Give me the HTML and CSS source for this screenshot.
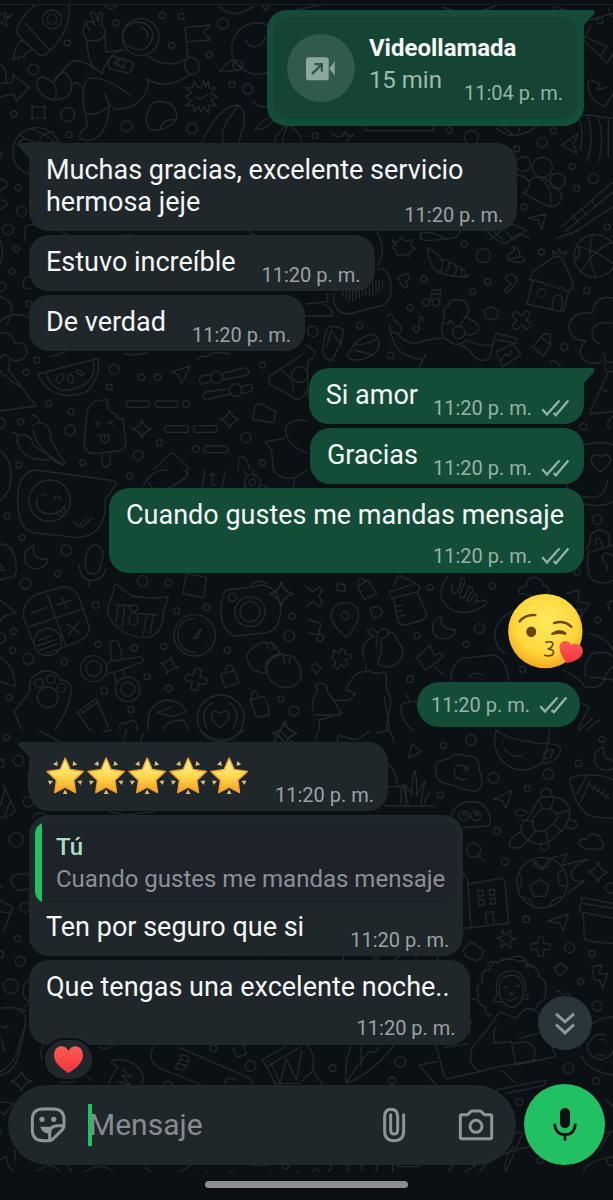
FILE: index.html
```
<!DOCTYPE html>
<html lang="es">
<head>
    <meta charset="UTF-8">
    <meta name="viewport" content="width=device-width, initial-scale=1">
    <title>Chat</title>
    <link rel="stylesheet" href="styles.css">
</head>
<body>

    <!-- shared shapes -->
    <svg class="defs" aria-hidden="true">
        <defs>
            <linearGradient id="gold" x1="0" y1="0" x2="0" y2="1">
                <stop offset="0" stop-color="#fff3a8"/>
                <stop offset=".5" stop-color="#ffdc52"/>
                <stop offset="1" stop-color="#f9a01b"/>
            </linearGradient>
            <radialGradient id="face" cx=".5" cy=".38" r=".64">
                <stop offset="0" stop-color="#ffe95c"/>
                <stop offset=".65" stop-color="#ffd83c"/>
                <stop offset="1" stop-color="#f2a21c"/>
            </radialGradient>
            <linearGradient id="red" x1="0" y1="0" x2="0" y2="1">
                <stop offset="0" stop-color="#ff5a55"/>
                <stop offset="1" stop-color="#f0353c"/>
            </linearGradient>
            <symbol id="ticks" viewBox="704 498 88 54">
                <path d="M708 529L722 545L760 502M742 540L749 547L787 502" fill="none" stroke="currentColor" stroke-width="7"/>
            </symbol>
            <symbol id="star" viewBox="139 77 116 116">
                <path d="M196 83L211 117L250 123L222 149L227 186L196 170L165 186L170 149L142 123L181 117Z" fill="url(#gold)" stroke="#f3a02c" stroke-width="4" stroke-linejoin="round"/>
                <path d="M160 102L172 92L174 107ZM232 102L220 92L218 107ZM145 150L160 151L150 163ZM247 150L232 151L242 163ZM196 177L203 190H189Z" fill="#dcbf7c"/>
            </symbol>
            <symbol id="sparkle" viewBox="-30 -30 60 60">
                <path d="M0 -27Q5 -6 27 0Q5 6 0 27Q-5 6 -27 0Q-5 -6 0 -27Z"/>
            </symbol>
            <symbol id="plus" viewBox="-36 -36 72 72">
                <path d="M-10 -30Q0 -36 10 -30V-10H30Q36 0 30 10H10V30Q0 36 -10 30V10H-30Q-36 0 -30 -10H-10Z"/>
            </symbol>
            <symbol id="moon" viewBox="-42 -42 84 84">
                <path d="M-8 -36Q-18 8 36 6Q24 38 -8 34Q-38 28 -36 -6Q-32 -28 -8 -36Z"/>
            </symbol>
            <symbol id="lock" viewBox="-36 -42 72 84">
                <path d="M-28 -8L18 -20L30 20L-14 36ZM-12 -14Q-16 -38 0 -38Q12 -36 12 -20"/>
            </symbol>
        </defs>
    </svg>

    <div class="screen">

        <!-- wallpaper doodles -->
        <svg class="wallpaper" viewBox="0 0 1839 3516" preserveAspectRatio="xMidYMin slice" aria-hidden="true">
            <g>
                <path d="M52 82Q75 30 125 0M52 82Q48 100 60 112L110 160Q122 170 135 165Q205 110 208 30Q208 10 200 0M75 68L148 150M62 122Q42 145 40 182Q50 165 56 178Q58 160 72 174Q72 155 95 150Q85 125 62 122"/>
                <circle cx="156" cy="58" r="28"/><circle cx="156" cy="58" r="15"/>
                <path d="M258 118Q240 85 262 66Q278 60 285 74L272 45Q275 30 285 40L295 66L298 38Q312 35 308 50L304 78Q325 90 308 115Q285 128 258 118M258 70L268 90M260 120Q262 170 282 210M315 108L318 156L368 150"/>
                <circle cx="422" cy="111" r="55"/><path d="M460 100Q450 155 410 148Q365 140 368 100Q380 68 415 66Q448 68 460 100M425 82Q446 90 443 112"/>
                <path d="M305 222Q325 160 370 148M336 168L388 182Q402 188 398 202Q394 220 378 218L336 208Q322 204 326 188Q328 170 336 168"/>
                <path d="M445 168Q500 210 555 178M563 170L555 83L632 75L610 97L632 120L562 125M565 172Q598 170 598 205Q592 226 570 222Q550 210 556 190Q558 176 565 172M572 222Q500 275 438 236Q450 255 440 270Q420 325 350 328Q325 325 315 278"/>
                <path d="M308 222Q240 170 210 186L162 245Q172 220 190 216M110 255Q108 232 130 230L160 248Q180 275 160 300Q120 292 110 255M160 300Q220 300 215 250Q205 220 190 216M215 255L230 246L250 262M256 340Q240 270 262 238Q305 220 390 286M256 338Q290 352 326 318Q330 370 300 405Q270 432 240 415Q235 395 262 380L256 338"/>
                <path d="M603 265L610 242L617 262L625 243L627 265L648 262L633 280L652 290L633 300L648 318L627 315L625 338L612 320L603 338L596 320L583 336L580 315L558 318L573 300L556 290L574 280L558 262L578 264L583 243L594 262ZM588 290L598 298L622 284"/>
                <path d="M465 305Q530 300 530 350Q530 362 518 372Q490 392 450 390Q435 370 440 350Q450 310 465 305M480 390Q484 355 528 360"/>
                <circle cx="772" cy="146" r="77"/><path d="M738 120Q745 142 768 140Q792 135 795 110M752 98V99M770 96V97M658 214L695 180L730 205L710 212Z"/><circle cx="714" cy="196" r="15"/>
                <path d="M0 250L38 248L40 225L88 262L48 303L40 282L0 290M0 195Q20 200 20 250M0 45L18 38L12 55L38 42L18 60L20 78L0 65"/>
                <path d="M605 430Q650 320 715 315Q740 330 730 380L715 430M670 430Q655 380 715 320M762 305Q770 325 810 320M765 388Q790 350 830 350Q800 392 765 388M860 375Q820 410 825 430M865 375Q845 410 850 430M868 375Q905 400 905 430M310 5Q330 50 356 5M655 20Q700 60 760 20"/>
                <circle cx="110" cy="455" r="72"/><path d="M60 405Q100 440 180 425M88 385Q150 405 165 430M118 430Q120 400 160 395M50 440Q70 400 100 430"/>
                <path d="M95 318Q115 325 136 318Q130 338 136 356Q115 350 94 358Q100 338 95 318Z"/>
                <path d="M0 535L20 545V560L0 570M0 600Q25 600 20 615L0 628M0 455L8 465L0 475"/>
                <path d="M75 680V720M75 680Q100 665 130 685L180 690L220 720M360 720Q380 690 420 720M740 690L790 720"/>
            </g>
            <g transform="translate(780 0)">
                <path d="M550 22Q640 55 720 10M110 30L200 10M890 20L990 60L1059 40M990 80L970 120L1040 190L1059 160M975 110L1040 140L1020 170M1045 25L1055 50M880 20V60"/>
                <path d="M985 240Q980 300 1035 320L1059 280M990 240L1020 250L1010 270L1040 262M905 435L955 400L940 430L950 460ZM955 350L990 345L1059 355M955 350Q975 400 960 450M985 352Q1005 420 980 485M1015 352Q1035 420 1015 485M1045 352V470"/>
                <path d="M905 680L1059 545M915 695L1059 575M930 705L1059 620M940 648L955 668M965 626L980 646M995 602L1008 620"/>
                <circle cx="790" cy="492" r="22"/><circle cx="847" cy="502" r="30"/><circle cx="892" cy="543" r="23"/><circle cx="634" cy="412" r="21"/>
                <path d="M768 530Q790 520 808 545Q810 570 790 578Q840 610 870 620Q900 620 905 590Q900 560 850 535Q820 525 808 545M845 540Q880 560 870 618M802 655L858 642L845 690L835 660ZM710 385Q760 430 830 380M730 380L760 405M780 380L770 410M215 400Q230 415 245 410L255 395L262 408L280 405L262 420L270 440M315 378V392H520V378M690 720L750 670L800 690L760 720M480 720V700Q520 690 560 720"/>
            </g>
            <g transform="translate(0 690)">
                <path d="M0 30Q15 60 0 105M100 140Q65 135 70 170Q80 180 95 175M0 200Q40 210 35 250L20 285M0 275Q35 240 85 262M0 310Q35 300 45 340Q80 330 80 370Q70 400 30 388M0 385Q15 360 30 388L25 420L108 528L0 543M0 420Q10 445 20 435Q35 460 60 470"/>
                <path d="M114 432L293 386Q305 440 260 485Q200 510 150 480Q120 455 114 432ZM138 430Q150 470 190 482Q240 480 270 450Q285 425 280 395M168 450Q170 430 192 432Q192 455 175 460ZM205 455Q198 435 215 432Q225 450 215 460ZM228 425Q235 412 252 432Q245 442 228 425Z"/>
                <path d="M325 510Q262 505 260 560L252 640Q255 670 280 670L350 664Q378 660 378 640L368 565Q350 570 345 550Q325 545 325 530Q315 520 325 510M306 670V700Q318 725 330 700V670M285 575L300 582L288 590M338 572L325 580L340 584M295 615H328M302 616Q300 638 315 640Q328 635 325 616M314 618V628"/>
                <path d="M515 425L570 408L545 462L535 435ZM382 513H445Q455 522 445 532H385Q372 522 382 513ZM470 513H530Q540 522 530 532H470Q460 522 470 513ZM500 587H562Q570 597 562 607H500Q488 597 500 587ZM585 587H647Q657 597 647 607H585Q575 597 585 587ZM615 648H680Q688 658 680 668H615Q605 658 615 648Z"/>
                <circle cx="650" cy="442" r="18"/><circle cx="707" cy="480" r="19"/><circle cx="558" cy="522" r="10"/><circle cx="587" cy="657" r="10"/><circle cx="899" cy="434" r="24"/>
                <path d="M632 434L605 438Q592 450 605 462L632 455M667 430L738 413Q752 425 742 435L668 450M690 476L615 486Q602 500 616 510L690 492M724 470L752 462Q762 475 752 485L724 490"/>
                <path d="M905 375L808 440Q802 460 815 465L890 508Q905 512 921 480M840 420Q880 440 880 480M765 530L775 520L800 530L828 545L820 578L758 568ZM858 590Q880 560 921 575M858 590Q850 640 921 670M795 635L855 625M795 635L815 660L820 720M460 720L510 670Q520 665 540 690Q560 700 565 720M715 720V690Q735 660 750 720"/>
                <path d="M98 590Q110 570 140 585Q155 610 152 625Q165 655 195 700Q180 715 140 670Q105 640 100 600M52 640Q45 610 75 615Q95 620 100 645L190 705M52 630Q60 675 100 685Q130 690 150 690M98 555Q118 560 118 578M32 608Q50 605 55 620M150 380L200 365M372 370Q400 380 440 368M590 390Q600 375 620 380Q640 360 690 372M0 660Q30 690 32 720"/>
            </g>
            <g transform="translate(918 690)">
                <path d="M258 30L272 38L285 22L298 34L318 28L314 45L328 55L312 64L310 80L292 72L272 78L272 62L258 52L270 45ZM365 55Q395 65 410 95Q410 125 398 128Q368 110 365 55ZM410 90Q432 85 430 108L415 132M430 100Q455 95 450 125L440 138M450 110Q472 105 466 136M468 118Q480 118 478 138L492 134M398 128L440 138L485 142"/>
                <path d="M210 0Q245 60 215 108M345 10Q340 32 365 32L440 25Q460 20 462 0M535 0L580 35L600 40L640 10L670 25M560 0L590 30M750 25L820 0M600 5L620 25"/>
                <circle cx="868" cy="78" r="64"/><path d="M810 50Q880 60 930 110M860 15Q840 80 870 140M925 35Q870 50 825 125M806 90Q830 75 815 45"/>
                <path d="M605 90Q600 75 615 68Q630 70 622 48Q645 60 640 75Q660 85 655 95Q620 100 605 90ZM610 85Q630 88 642 76M670 148L685 120L742 82L760 78Q785 110 802 165Q800 182 788 180Q775 188 770 172Q755 180 750 168Q735 175 730 162Q715 170 710 155Q695 162 690 148Q680 155 670 148M680 152L662 222L772 246L788 184M738 236L742 205Q750 190 768 200Q772 215 765 242M745 82L740 62L755 72L760 56L768 72L782 64L772 85"/>
                <circle cx="707" cy="190" r="13"/>
                <path d="M275 140L305 130Q318 150 298 155L305 170L292 175ZM598 148Q600 130 620 134Q638 145 632 155L605 190L596 182L615 160ZM372 215L378 180H405L400 218M376 192H404"/><circle cx="360" cy="217" r="11"/><circle cx="390" cy="217" r="11"/><path d="M338 295L342 260Q355 262 350 275"/><circle cx="331" cy="297" r="9"/>
                <path d="M85 190Q75 250 130 252L235 225Q270 190 245 130Q230 110 215 120M110 180V200M120 178V208M130 176V212M140 174V215M150 172V208M160 170V205M170 168V200M180 165V195M190 160V200M200 155V195M210 152V190M220 150V185M230 150V172M0 222L65 215V190M50 222Q85 235 80 258H0"/>
                <path d="M65 292Q90 285 112 298Q110 330 80 390Q55 395 50 360Q55 310 65 292M62 350L75 300L105 345L110 310M125 375Q150 320 205 312Q225 330 215 360Q190 390 145 390Q125 388 125 375ZM150 345Q200 340 212 325M145 360L200 375"/>
                <path d="M245 260Q255 240 265 270L285 290Q290 310 275 312Q310 355 360 330Q390 325 410 325M250 285Q250 310 270 350Q290 380 345 388M250 305L280 310M360 370L340 410M415 265Q405 235 430 225Q430 205 455 210Q485 210 485 235Q495 245 475 265L460 292M412 270Q400 300 415 325L440 340Q460 350 480 330M410 280H430V270L445 285M475 260Q490 260 492 270Q520 275 518 300Q515 315 480 315"/><circle cx="458" cy="307" r="19"/>
                <path d="M482 330Q520 350 560 345M460 345Q480 345 505 380Q530 400 550 385L570 310L632 325L630 340L575 330M570 365L622 342L645 375L590 410ZM585 390L600 370L608 380L618 360M535 240L555 230L576 240V260L560 270L540 265ZM0 345L30 365L20 385L5 395V500M732 400Q735 390 750 395L765 410"/>
                <path d="M680 350L705 322L735 345L712 378ZM705 322Q715 305 732 315V340"/><use href="#plus" x="612" y="235" width="70" height="72" transform="rotate(42 647 270)"/>
                <path d="M921 205Q870 190 858 250Q800 240 788 290Q795 335 840 332Q810 360 830 385Q850 410 890 395M921 280Q860 270 858 310Q860 335 880 340M893 370L900 395L921 398M895 400L900 425H921M905 430L850 552L921 545M885 470Q895 490 905 480M921 560Q895 580 910 595"/>
                <path d="M835 645Q890 630 921 645M855 690Q860 665 885 680Q905 665 915 690Q905 710 885 725Q860 710 855 690"/>
            </g>
            <g transform="translate(0 1410)">
                <path d="M55 60Q60 5 110 0L340 32Q355 38 345 48L315 90Q320 150 290 180Q260 205 225 202L100 188Q45 175 55 60ZM32 0Q40 60 0 92"/><circle cx="149" cy="92" r="62"/><path d="M110 85Q105 130 150 132Q185 130 195 105M122 78Q128 65 138 78M163 85Q172 68 182 88M168 120Q170 140 190 137Q205 130 190 110M180 122L188 130M222 155L235 170L258 145M238 165L246 172L275 145"/>
                <path d="M430 50Q450 0 500 0M445 35L460 58M550 0Q590 10 515 50L490 60M605 60L615 0M675 5L665 60M560 5Q570 20 520 45M630 15H648M638 8L634 42Q640 50 648 42M730 0L740 15M760 0L762 18M820 0Q860 50 921 0M880 50L885 25"/><circle cx="757" cy="37" r="24"/><circle cx="757" cy="37" r="9"/><path d="M735 50L730 60M780 42L815 60"/>
                <path d="M260 250Q270 220 295 228Q312 240 308 260L298 300Q285 320 265 308Q250 295 260 250M238 285Q240 330 275 332Q310 330 318 295M268 333L265 350M0 222Q35 220 45 265Q55 310 40 320L0 330M0 280L12 300H0M0 390L48 428L10 440L0 455M0 562Q45 590 45 650L0 635"/>
                <path d="M120 370L190 350Q225 350 238 385L268 470Q270 500 235 515L130 555M70 440Q68 400 100 378L120 370M70 440L100 520M88 470L255 415M142 375L198 528M92 430L142 412M170 405L215 390M185 380L200 415M200 460L240 490M238 455L205 495"/><circle cx="143" cy="516" r="41"/><path d="M115 512L155 497M112 528L170 508M120 540L172 522"/>
                <path d="M345 340L395 378L455 385L505 380L490 425Q490 490 445 502Q380 505 340 460Q310 420 335 385ZM345 403L395 408M355 405L348 455M375 407L366 470M415 430L472 435M440 432L430 495M460 435L450 490M388 408Q385 420 400 425Q415 425 412 410Q400 400 388 408M400 425Q382 440 390 462Q402 468 412 460Q420 440 400 425"/>
                <circle cx="584" cy="496" r="62"/><path d="M584 446Q530 450 534 500Q540 545 584 546M580 505L605 475L590 505ZM608 455V456M622 472V473M630 496V497M622 521V522M608 540V541"/>
                <path d="M548 370L560 310L620 322L610 384ZM680 360L760 350L785 345Q840 350 842 420L838 450Q830 480 800 488L710 498Q680 495 665 450Q658 380 680 360M755 345Q770 325 800 340"/><circle cx="697" cy="382" r="12"/><circle cx="750" cy="425" r="45"/><circle cx="750" cy="425" r="30"/>
                <path d="M740 555Q755 525 795 515L825 525L840 550Q800 560 795 590Q795 600 800 608Q745 610 740 555M800 590Q810 560 845 552L880 560Q910 590 900 630Q880 660 840 650Q800 635 800 590M795 515L810 540M815 515L825 540M850 555L855 580M870 560L868 582"/>
                <circle cx="281" cy="596" r="39"/><circle cx="281" cy="596" r="23"/><circle cx="383" cy="658" r="37"/><circle cx="383" cy="658" r="21"/><path d="M318 588L330 575L420 560Q435 565 428 575L350 605L320 612M335 575L330 520Q340 505 355 515L368 568M342 608L350 640M370 602L375 622"/>
                <path d="M42 725L90 665Q85 620 115 612Q125 600 150 604Q175 608 180 630Q215 630 213 665Q210 710 165 780M42 725L65 780"/><circle cx="117" cy="640" r="13"/><circle cx="153" cy="628" r="13"/><circle cx="184" cy="653" r="13"/><circle cx="143" cy="682" r="31"/>
                <path d="M232 728L288 685L325 770M232 728L270 780M245 730L290 698M360 780Q355 755 375 760L400 750Q415 760 410 780M445 780Q435 700 500 690Q540 690 560 725L520 740L470 728L520 710M490 780Q500 750 550 750L565 780"/>
                <circle cx="662" cy="745" r="70"/><path d="M620 775Q595 720 640 698M700 775Q725 725 690 698M635 740Q635 715 660 730Q685 715 688 740Q680 760 660 772Q640 760 635 740M750 690L790 680Q805 690 808 735L770 742ZM755 688V670Q765 655 772 668L775 682M848 760L870 780"/>
                <use href="#moon" x="68" y="220" width="84" height="84"/><use href="#plus" x="552" y="592" width="72" height="72" transform="rotate(12 588 628)"/><use href="#lock" x="655" y="580" width="66" height="80"/>
            </g>
            <g transform="translate(918 1410)">
                <path d="M780 40Q790 80 860 82Q900 80 905 30M830 100Q880 115 921 95M848 240Q835 230 850 225L855 195Q880 165 910 195V225M870 225V205Q880 195 890 230M845 250Q840 330 870 335Q900 345 921 330M848 248L921 225M905 300L900 280Q880 262 895 252Q910 245 921 260"/>
                <path d="M0 350L20 365L40 350L50 360L38 380L50 400L38 410L20 395L0 410M95 340L118 345L115 365L92 360ZM75 440Q80 395 118 398Q158 400 158 440Q150 475 120 503Q85 475 75 440"/><circle cx="117" cy="437" r="12"/>
                <path d="M155 350L185 330L212 370L175 388ZM158 348Q150 325 168 325L182 335M192 415L215 408L230 425L222 442L200 444ZM252 365L330 340Q345 350 338 365L258 385Q248 375 252 365M262 350Q270 335 275 320Q285 312 295 325Q310 325 325 340M262 385L275 450Q280 468 300 465L350 450Q365 440 360 425L335 370M270 410L288 405M275 425L285 422M278 440L296 435"/>
                <path d="M425 320Q390 370 415 400Q440 430 480 428Q540 415 542 395Q530 385 505 398M440 340Q430 365 445 370Q460 370 465 325Q480 320 475 340L460 375Q465 390 475 380L490 350Q505 350 498 365L482 392Q495 400 505 370Q520 375 510 390M640 370Q635 350 660 350Q660 320 690 322Q715 330 710 345Q735 350 728 370Q700 385 640 370M780 370L820 360L815 395L850 400L820 450L828 420L790 415M620 425Q560 450 568 510Q575 540 600 550M921 390L905 400L910 420"/>
                <path d="M8 450L45 460L38 495L5 488M40 490L55 500L45 515L32 510ZM85 540L100 550L105 535L118 540L115 552L135 555V565L118 570L125 585L112 592L105 580L95 598L82 590L90 575L78 565ZM15 590L30 580L45 595L32 612ZM372 525L330 565L345 575Q345 590 360 600L412 560L405 550L385 555ZM385 590L412 612M435 635Q435 580 470 565L560 555Q600 560 610 635M490 625Q500 600 530 615M310 690L300 672M285 720Q280 700 310 695Q340 690 340 700M285 720Q290 760 320 780"/>
                <path d="M175 570L170 545Q175 505 205 500Q185 495 185 480Q200 470 215 490Q230 470 245 480Q255 500 225 505Q230 560 215 570M215 495L210 530M245 490Q265 480 275 515Q300 540 285 565Q265 595 240 590Q215 590 215 570M180 580V600Q210 615 235 605M180 605Q145 600 120 660L150 670L130 690L80 692M235 605Q245 620 240 650L255 690L240 780M235 680L250 780M20 720Q15 680 35 665L30 645Q40 635 62 645L65 665Q85 690 105 730M40 780V750L105 730M25 735L100 735"/>
                <path d="M770 600Q830 630 835 650Q870 660 890 640Q900 600 921 590M840 620Q830 580 860 550Q900 540 921 560M850 490Q900 500 921 540M825 700L850 710L815 780M850 620L921 630M820 780L860 745M840 780L880 750"/>
                <use href="#moon" x="374" y="432" width="82" height="82"/>
            </g>
            <g transform="translate(0 2190)">
                <path d="M115 0L190 40M370 40L380 0M310 5L335 0M420 40L430 10M600 0Q670 60 730 0M820 40L840 0Q860 30 890 40M0 90L12 88L10 110L0 115M10 165L45 240Q35 265 0 262M15 180L0 230M30 215L15 255M85 130V180M100 265L105 250H135L140 275M35 440Q60 425 85 435M35 440Q28 470 60 482L90 475M90 355V400M0 512L38 530L10 610M0 545L35 550M0 465L8 475M115 705L125 695Q145 700 150 710M770 700L775 690M820 700L825 690M860 690L880 700M330 245L380 255L460 245"/>
            </g>
            <g transform="translate(918 2190)">
                <path d="M30 35L35 0M95 35V15L150 30L190 5M210 10L250 0L265 35M245 100Q270 120 275 165L300 175V225M285 170V222M245 170H300M235 228H385M308 222Q295 190 290 160Q315 180 318 195Q315 150 328 120Q335 170 330 200Q345 170 358 152Q345 200 345 222M355 222Q360 200 370 190"/>
                <path d="M318 42L345 65L308 85L312 65ZM390 130Q380 90 425 88Q450 65 480 78Q520 75 520 120Q540 170 510 185Q470 180 440 165Q390 160 390 130M482 115Q470 100 452 108Q440 120 447 138Q460 155 482 146M488 108L484 122L472 116M570 0Q555 60 595 100Q650 140 705 100Q725 70 730 0M570 0Q600 25 670 35Q725 50 730 30M725 42Q770 40 762 65Q750 100 708 100M742 58L715 65L712 88L735 82ZM595 55Q615 85 648 78M592 35V38M660 65V68"/>
                <path d="M436 265Q440 225 485 215Q540 210 552 260Q555 290 545 288L470 293"/><circle cx="473" cy="257" r="15"/><circle cx="509" cy="257" r="15"/><circle cx="476" cy="252" r="5"/><circle cx="512" cy="252" r="5"/>
                <path d="M563 207L617 182L600 236L590 212ZM663 270L700 205Q720 198 745 200Q780 205 792 240Q790 290 755 310Q725 350 690 340Q645 330 645 290Q650 275 663 270M680 265L710 235Q740 235 755 255Q755 275 720 300Q690 310 682 295ZM682 275L648 270M690 300L665 330M720 300L725 335M745 285L770 305M755 250L790 240M735 237L745 202M710 235L698 208M708 200Q700 175 722 175Q740 180 738 198M655 255Q625 265 628 245Q640 230 665 248M645 305Q605 325 612 350Q640 365 665 330M705 342Q700 362 715 362Q732 360 728 340M790 270Q815 270 812 288Q800 305 780 290"/>
                <path d="M795 165Q780 140 820 137Q890 130 921 150M795 165Q820 265 880 262L921 265M815 190L840 140M825 215L850 155M850 165L910 205M860 180L870 165M872 188L882 172M885 195L895 180M897 205L907 190"/>
                <circle cx="503" cy="361" r="21"/><path d="M518 378L535 393M820 345Q815 325 840 328Q850 305 872 315Q885 315 882 330Q900 340 888 355Q840 365 820 345M470 425L485 450L495 595M485 462L585 445Q595 448 597 460L608 580L472 595M515 483L530 481L532 497L517 499ZM550 480L565 478L567 494L552 496ZM518 510L533 508L535 525L520 527ZM552 506L567 504L569 521L554 523ZM542 582L538 548L560 545L564 580"/>
                <circle cx="708" cy="458" r="76"/><path d="M672 468L700 448L728 465L720 498L685 500ZM680 390L708 415L735 390M690 395L682 405L708 418L730 405M640 430L648 450L638 480M770 420L755 430L760 465L778 470M650 500L672 510L682 528M765 500L740 510L730 528M725 388L785 370L768 405L848 388Q800 405 795 435Q800 460 835 452L785 490"/>
                <path d="M828 503L921 520M828 503L820 545L921 565M832 550L835 625Q840 635 921 640M830 520L921 535M725 573L787 552L772 602L762 580ZM590 600L600 615L615 600L612 620L630 628L612 632L615 655L600 640L585 655L590 632L572 625L590 618ZM470 660L495 635L532 660Q530 690 510 692L480 680Z"/><use href="#plus" x="672" y="618" width="64" height="64"/>
                <path d="M545 710Q550 685 575 700Q590 680 610 690Q620 675 645 680Q665 690 660 710Q680 700 690 718M745 715L760 700L785 712M860 710L888 705M112 690V680M200 690L210 680L220 690M265 690L280 680M395 680V690M330 680V690"/>
            </g>
            <g transform="translate(0 2880)">
                <path d="M85 60Q60 80 75 115L90 130M0 145Q60 135 75 165Q80 200 60 240Q50 310 0 335M55 150L85 135M60 155L78 150M0 345Q45 340 60 270L75 200M5 200Q20 210 25 190M0 235L10 250M5 250L15 275M0 425L38 430L12 465L0 455M130 255Q115 285 130 300M185 358V368L222 365L225 355M298 262Q320 270 340 258M333 305Q350 290 400 310Q440 340 425 372M335 310L355 318L325 370M370 330L395 350L365 345L390 375L355 365M250 350Q270 345 272 360"/>
                <path d="M460 260Q440 300 480 325L600 372M535 262L740 350Q755 360 760 375M525 325L545 285Q570 285 568 300L552 330ZM535 310L560 318M540 298L565 305M675 370Q680 345 705 360M490 372Q500 355 520 372M697 262L710 292L740 282L728 255M785 300L860 258M785 300L800 320L900 262M800 320L825 370L900 370L940 330M815 315L840 370L858 295L890 360L905 270"/>
                <path d="M0 600L18 590L25 620L40 635M110 635Q150 600 180 635M195 600L215 635M255 635Q300 605 340 635M435 622L455 638M535 638L575 615M0 510L5 525M45 570V600M760 615H800M583 634H586M618 634H622M690 634H700M812 634H818M890 634H895"/>
            </g>
            <g transform="translate(918 2880)">
                <path d="M555 165Q530 160 540 140Q510 135 518 105Q505 75 530 65Q520 30 550 30Q560 0 580 5Q610 -10 640 5Q665 -5 670 20Q700 20 700 50Q725 60 718 90Q725 120 695 130Q700 150 665 145M572 100Q565 35 615 32Q660 35 660 95M580 95Q575 50 615 45Q650 45 652 90Q650 135 620 142Q585 140 580 95M578 105Q560 110 565 125L585 125M652 100Q670 105 665 118L650 115M592 85Q598 75 605 85M628 80Q635 70 640 80M610 98L622 102L612 106M605 120Q620 125 630 112"/>
                <path d="M580 155L630 175L660 145M580 155Q555 200 500 260Q480 310 520 335L580 320L690 300M570 200Q555 230 570 250M660 145Q710 150 715 200M560 250L615 245L630 310M620 250L660 245Q700 260 680 300M640 235L720 215L750 290L630 315M390 255L415 350Q420 358 430 355L520 335M415 262L490 250M340 315L395 305M340 315L390 375M585 330L630 370M570 390L720 360Q720 375 700 380L600 400M495 180L490 225M495 118H512"/>
                <path d="M5 255Q30 290 20 330Q10 350 0 345M20 330L50 375M135 260Q115 300 120 370Q200 340 262 258M165 260V320M120 370Q150 320 190 275L210 275L220 262M745 30L765 8L783 28L762 48ZM858 22L885 15L880 40L905 42L890 85L882 62L865 60ZM750 95Q765 90 770 105M775 105Q785 95 795 108M820 260Q830 180 921 170M825 285Q840 330 921 345M850 250Q860 215 900 225M845 250Q840 290 885 300Q921 290 921 270M880 240Q890 230 900 245M875 285Q885 290 895 285"/>
                <path d="M615 515L650 520L600 635Q590 600 622 560M520 635Q560 580 670 560M480 635L530 600M430 635Q440 590 520 600M210 635L215 605H260V635M275 600V620H340V600M20 635Q35 620 40 635M60 610Q90 620 65 635M120 610L130 635M155 610Q180 620 165 635M870 520L921 515M880 570L910 520M830 635Q850 600 921 590M900 420L921 440"/>
            </g>
            <!-- bubbles between the doodles -->
            <g>
                <circle cx="487" cy="46" r="9"/><circle cx="544" cy="49" r="9"/><circle cx="347" cy="69" r="9"/><circle cx="202" cy="129" r="9"/><circle cx="100" cy="208" r="16"/><circle cx="515" cy="136" r="9"/><circle cx="669" cy="71" r="16"/><circle cx="628" cy="164" r="9"/><circle cx="696" cy="254" r="9"/><circle cx="743" cy="267" r="15"/><circle cx="203" cy="344" r="21"/><circle cx="41" cy="342" r="9"/><circle cx="380" cy="379" r="16"/><circle cx="576" cy="385" r="16"/><circle cx="207" cy="404" r="9"/><circle cx="54" cy="563" r="9"/><circle cx="65" cy="634" r="15"/><circle cx="24" cy="688" r="16"/><circle cx="798" cy="20" r="9"/>
                <circle cx="1347" cy="391" r="9"/><circle cx="945" cy="407" r="9"/><circle cx="1627" cy="428" r="15"/><circle cx="1660" cy="392" r="9"/><circle cx="1550" cy="447" r="9"/><circle cx="1717" cy="499" r="9"/><circle cx="1780" cy="536" r="15"/><circle cx="1730" cy="566" r="9"/><circle cx="1571" cy="621" r="9"/><circle cx="1821" cy="681" r="9"/><circle cx="1800" cy="63" r="9"/>
                <circle cx="49" cy="746" r="9"/><circle cx="36" cy="814" r="9"/><circle cx="4" cy="860" r="13"/><circle cx="87" cy="911" r="9"/><circle cx="111" cy="1080" r="9"/><circle cx="78" cy="1117" r="9"/><circle cx="343" cy="1108" r="15"/><circle cx="424" cy="1132" r="10"/><circle cx="473" cy="1132" r="10"/><circle cx="328" cy="1161" r="9"/><circle cx="787" cy="1095" r="9"/><circle cx="146" cy="1210" r="9"/><circle cx="213" cy="1234" r="9"/><circle cx="62" cy="1265" r="9"/><circle cx="210" cy="1291" r="16"/><circle cx="0" cy="1270" r="16"/><circle cx="478" cy="1328" r="9"/><circle cx="415" cy="1366" r="15"/><circle cx="248" cy="1388" r="9"/><circle cx="57" cy="1395" r="9"/><circle cx="738" cy="1312" r="15"/><circle cx="787" cy="1389" r="9"/>
                <circle cx="1393" cy="733" r="9"/><circle cx="1450" cy="767" r="21"/><circle cx="1624" cy="756" r="9"/><circle cx="1272" cy="837" r="9"/><circle cx="1463" cy="846" r="9"/><circle cx="1418" cy="874" r="9"/><circle cx="1760" cy="872" r="9"/><circle cx="1230" cy="923" r="9"/><circle cx="1079" cy="977" r="9"/><circle cx="938" cy="994" r="16"/><circle cx="1171" cy="1066" r="10"/><circle cx="1693" cy="1041" r="10"/><circle cx="1750" cy="1280" r="10"/>
                <circle cx="389" cy="1428" r="9"/><circle cx="21" cy="1548" r="9"/><circle cx="66" cy="1613" r="9"/><circle cx="199" cy="1651" r="16"/><circle cx="173" cy="1721" r="9"/><circle cx="77" cy="1751" r="16"/><circle cx="428" cy="1743" r="16"/><circle cx="505" cy="1749" r="10"/><circle cx="287" cy="1815" r="10"/><circle cx="530" cy="1832" r="9"/><circle cx="620" cy="1822" r="10"/><circle cx="41" cy="1894" r="9"/><circle cx="2" cy="1914" r="15"/><circle cx="38" cy="1952" r="9"/><circle cx="85" cy="1977" r="16"/><circle cx="193" cy="1985" r="9"/><circle cx="294" cy="1933" r="9"/><circle cx="403" cy="1944" r="9"/><circle cx="491" cy="1939" r="9"/><circle cx="682" cy="1951" r="9"/><circle cx="441" cy="2030" r="9"/><circle cx="505" cy="2065" r="10"/><circle cx="313" cy="2073" r="10"/><circle cx="27" cy="2093" r="9"/><circle cx="393" cy="2129" r="9"/><circle cx="843" cy="2097" r="9"/><circle cx="882" cy="2133" r="15"/><circle cx="868" cy="1908" r="16"/><circle cx="876" cy="1849" r="9"/>
                <circle cx="1791" cy="1558" r="15"/><circle cx="1732" cy="1717" r="9"/><circle cx="1290" cy="1762" r="9"/><circle cx="1477" cy="1758" r="9"/><circle cx="1438" cy="1886" r="15"/><circle cx="1251" cy="1906" r="9"/><circle cx="1398" cy="1933" r="9"/><circle cx="1794" cy="1860" r="9"/><circle cx="1230" cy="2037" r="10"/><circle cx="1568" cy="2008" r="9"/>
                <circle cx="20" cy="2213" r="9"/><circle cx="56" cy="2282" r="16"/><circle cx="85" cy="2405" r="16"/><circle cx="49" cy="2519" r="21"/><circle cx="75" cy="2722" r="15"/><circle cx="53" cy="2816" r="9"/><circle cx="61" cy="2884" r="15"/><circle cx="1" cy="2863" r="10"/>
                <circle cx="1413" cy="2220" r="16"/><circle cx="1330" cy="2237" r="9"/><circle cx="1480" cy="2333" r="16"/><circle cx="1645" cy="2323" r="16"/><circle cx="1736" cy="2290" r="10"/><circle cx="1806" cy="2218" r="9"/><circle cx="1582" cy="2366" r="9"/><circle cx="1321" cy="2385" r="9"/><circle cx="1491" cy="2493" r="10"/><circle cx="1515" cy="2585" r="10"/><circle cx="1578" cy="2758" r="10"/><circle cx="1709" cy="2843" r="15"/><circle cx="1776" cy="2862" r="9"/><circle cx="1831" cy="2664" r="15"/>
                <circle cx="33" cy="2959" r="22"/><circle cx="640" cy="3145" r="10"/><circle cx="752" cy="3198" r="16"/><circle cx="998" cy="3205" r="10"/><circle cx="1201" cy="3185" r="16"/><circle cx="1176" cy="3241" r="10"/><circle cx="1742" cy="2944" r="9"/><circle cx="1791" cy="3018" r="15"/><circle cx="1705" cy="3206" r="16"/><circle cx="1788" cy="3243" r="10"/><circle cx="1558" cy="3306" r="10"/><circle cx="1620" cy="3482" r="9"/><circle cx="857" cy="3496" r="10"/><circle cx="1832" cy="3484" r="12"/>
                <use href="#sparkle" x="395" y="1256" width="62" height="62"/><use href="#sparkle" x="658" y="1227" width="62" height="62"/><use href="#sparkle" x="478" y="1966" width="60" height="60" transform="rotate(15 508 1996)"/><use href="#sparkle" x="805" y="1743" width="78" height="78"/><use href="#sparkle" x="1761" y="2584" width="66" height="66"/><use href="#sparkle" x="30" y="3210" width="68" height="68"/><use href="#sparkle" x="815" y="2160" width="80" height="80"/><use href="#moon" x="1778" y="2234" width="84" height="84"/>
            </g>
            <text x="340" y="202" transform="rotate(14 362 192)">42</text>
        </svg>

        <div class="top-line"></div>

        <main class="chat">

            <div class="bubble out tail call">
                <div class="call-card">
                    <span class="call-icon">
                        <svg viewBox="141 160 88 88" width="29" height="29" aria-hidden="true">
                            <rect x="141" y="170" width="69" height="70" rx="8" fill="#8ca79c"/>
                            <path d="M212 204L228 182V226Z" fill="#8ca79c"/>
                            <path d="M159 221L188 192M167 191H189V213" fill="none" stroke="#2c5747" stroke-width="7"/>
                        </svg>
                    </span>
                    <div>
                        <div class="call-title">Videollamada</div>
                        <div class="call-row">
                            <span class="call-length">15 min</span>
                            <time class="time">11:04 p. m.</time>
                        </div>
                    </div>
                </div>
            </div>

            <div class="bubble in tail group">Muchas gracias, excelente servicio hermosa jeje<time class="time">11:20 p. m.</time></div>
            <div class="bubble in">Estuvo increíble<time class="time">11:20 p. m.</time></div>
            <div class="bubble in">De verdad<time class="time">11:20 p. m.</time></div>

            <div class="bubble out tail group">Si amor<time class="time">11:20 p. m. <svg class="ticks" role="img" aria-label="Entregado"><use href="#ticks"/></svg></time></div>
            <div class="bubble out">Gracias<time class="time">11:20 p. m. <svg class="ticks" role="img" aria-label="Entregado"><use href="#ticks"/></svg></time></div>
            <div class="bubble out stacked">
                <p>Cuando gustes me mandas mensaje</p>
                <time class="time">11:20 p. m. <svg class="ticks" role="img" aria-label="Entregado"><use href="#ticks"/></svg></time>
            </div>

            <div class="sticker">
                <svg viewBox="609 375 226 224" width="76" height="75" role="img" aria-label="Beso">
                    <circle cx="720" cy="486" r="111" fill="url(#face)"/>
                    <ellipse cx="678" cy="488" rx="15" ry="16" fill="#6b4410"/>
                    <g fill="none" stroke="#6b4410" stroke-width="7" stroke-linecap="round">
                        <path d="M643 457Q660 436 690 438"/>
                        <path d="M746 462Q775 452 798 473"/>
                        <path d="M741 494Q762 478 782 494Q762 488 741 494"/>
                        <path d="M722 519Q745 514 742 527Q738 538 727 539Q748 541 744 553Q738 563 718 558" stroke-width="5"/>
                    </g>
                    <path d="M797 528C790 508 758 512 763 540C766 558 778 574 785 581C800 578 828 570 832 548C834 526 808 518 797 528Z" fill="url(#red)"/>
                </svg>
                <div class="time-pill"><time class="time">11:20 p. m. <svg class="ticks" role="img" aria-label="Entregado"><use href="#ticks"/></svg></time></div>
            </div>

            <div class="bubble in tail stars-bubble">
                <span class="stars" role="img" aria-label="Cinco estrellas">
                    <svg><use href="#star"/></svg>
                    <svg><use href="#star"/></svg>
                    <svg><use href="#star"/></svg>
                    <svg><use href="#star"/></svg>
                    <svg><use href="#star"/></svg>
                </span>
                <time class="time">11:20 p. m.</time>
            </div>

            <div class="bubble in reply">
                <blockquote class="quote">
                    <strong>Tú</strong>
                    <p>Cuando gustes me mandas mensaje</p>
                </blockquote>
                <div class="reply-text">Ten por seguro que si<time class="time">11:20 p. m.</time></div>
            </div>

            <div class="bubble in stacked">
                <p>Que tengas una excelente noche..</p>
                <time class="time">11:20 p. m.</time>
                <button class="reaction" type="button" aria-label="Me encanta">
                    <svg viewBox="160 262 86 80" width="29" height="27" aria-hidden="true">
                        <path d="M203 277C194 255 160 258 160 290C160 315 188 332 203 342C218 332 246 315 246 290C246 258 212 255 203 277Z" fill="url(#red)"/>
                    </svg>
                </button>
            </div>

            <button class="scroll-down" type="button" aria-label="Ir al final">
                <svg viewBox="748 163 60 68" width="20" height="23" aria-hidden="true">
                    <path d="M751 168L778 192L805 168M751 200L778 225L805 200" fill="none" stroke="#8e989e" stroke-width="9"/>
                </svg>
            </button>
        </main>

        <form class="composer">
            <div class="message-box">
                <button class="icon-btn" type="button" aria-label="Stickers">
                    <svg viewBox="89 440 108 108" aria-hidden="true">
                        <path d="M191 496V478Q191 446 159 446H128Q96 446 96 478V510Q96 541 128 541H146Q152 541 158 536L186 508Q191 502 191 496H170Q148 497 148 518V540"/>
                        <circle class="solid" cx="125" cy="477" r="8"/>
                        <circle class="solid" cx="160" cy="477" r="8"/>
                        <path class="solid" d="M119 499Q127 520 148 520Q148 503 164 499Z"/>
                    </svg>
                </button>
                <span class="caret"></span>
                <input class="message-input" type="text" placeholder="Mensaje" aria-label="Mensaje">
                <button class="icon-btn" type="button" aria-label="Adjuntar">
                    <svg viewBox="210 440 108 108" aria-hidden="true">
                        <path d="M293 463V512Q293 541 264 541Q236 541 236 512V470Q236 447 255 447Q275 447 275 470V508Q275 521 264 521Q254 521 254 508V463"/>
                    </svg>
                </button>
                <button class="icon-btn" type="button" aria-label="Cámara">
                    <svg viewBox="456 440 108 108" aria-hidden="true">
                        <path d="M467 463H485L496 452H524L535 463H553Q557 463 557 467V531Q557 535 553 535H467Q463 535 463 531V467Q463 463 467 463Z"/>
                        <circle cx="510" cy="498" r="18"/>
                    </svg>
                </button>
            </div>
            <button class="mic-btn" type="button" aria-label="Grabar audio">
                <svg viewBox="722 438 108 108" width="36" height="36" aria-hidden="true">
                    <rect x="761" y="441" width="30" height="61" rx="15" fill="#0b1014"/>
                    <path d="M745 488Q747 521 776 521Q805 521 807 488M776 521V539" fill="none" stroke="#0b1014" stroke-width="8"/>
                </svg>
            </button>
        </form>
    </div>

    <div class="nav-bar"><span></span></div>

</body>
</html>
```
FILE: styles.css
```
* {
    box-sizing: border-box;
}

body {
    margin: 0;
    min-height: 100vh;
    display: flex;
    flex-direction: column;
    background-color: #0b1014;
    color: #f4f6f7;
    font-family: Roboto, sans-serif;
    font-size: 27px;
    line-height: 32px;
}

p, blockquote {
    margin: 0;
}

button {
    border: none;
    padding: 0;
    background: none;
    display: flex;
    align-items: center;
    justify-content: center;
}

.defs {
    position: absolute;
    width: 0;
    height: 0;
}

.screen {
    position: relative;
    flex: 1;
    display: flex;
    flex-direction: column;
    overflow: hidden;
}

/* wallpaper */
.wallpaper {
    position: absolute;
    top: 0;
    left: 0;
    width: 100%;
    height: 100%;
    fill: none;
    stroke: #22282c;
    stroke-width: 4;
    stroke-linecap: round;
    stroke-linejoin: round;
}

.wallpaper text {
    font-size: 36px;
    stroke-width: 2;
}

.top-line {
    position: relative;
    height: 5px;
    background-color: #0b1014;
    border-bottom: 1px solid #1b2124;
}

/* messages */
.chat {
    position: relative;
    flex: 1;
    display: flex;
    flex-direction: column;
    align-items: flex-start;
    gap: 4px;
    padding: 5px 29px 38px;
}

.bubble {
    position: relative;
    display: flow-root;
    max-width: 88%;
    padding: 11px 14px 4px 17px;
    border-radius: 20px;
}

.in {
    background-color: #1f272a;
}

.out {
    align-self: flex-end;
    background-color: #144d37;
}

.group {
    margin-top: 13px;
}

.in.tail {
    border-top-left-radius: 0;
}

.out.tail {
    border-top-right-radius: 0;
}

.tail::before {
    content: "";
    position: absolute;
    top: 0;
    width: 12px;
    height: 16px;
    background-color: inherit;
}

.in.tail::before {
    left: -11px;
    clip-path: path("M3 0 H12 V16 L1 4 Q-1 0 3 0 Z");
}

.out.tail::before {
    right: -11px;
    clip-path: path("M9 0 H0 V16 L11 4 Q13 0 9 0 Z");
}

.time {
    float: right;
    display: flex;
    align-items: center;
    gap: 9px;
    margin: 17px 0 0 26px;
    color: #9ba1a4;
    font-size: 20px;
    line-height: 24px;
    white-space: nowrap;
}

.out .time,
.time-pill .time {
    margin-left: 15px;
    color: #93b3a6;
}

.ticks {
    width: 29px;
    height: 18px;
}

.stacked {
    padding-bottom: 5px;
}

.stacked p {
    padding-right: 6px;
}

.stacked .time {
    margin-top: 13px;
}

/* video call */
.call {
    padding: 7px;
}

.call-card {
    position: relative;
    display: flex;
    align-items: flex-start;
    gap: 14px;
    padding: 15px 14px 14px 13px;
    border-radius: 14px;
    background-color: #164434;
}

.call-icon {
    display: flex;
    align-items: center;
    justify-content: center;
    width: 68px;
    height: 68px;
    margin-top: 2px;
    border-radius: 50%;
    background-color: #315a4b;
}

.call-title {
    font-size: 24px;
    font-weight: bold;
}

.call-row {
    display: flex;
    align-items: flex-start;
}

.call-length {
    color: #9dbbae;
    font-size: 24px;
}

.call-row .time {
    margin-left: 22px;
}

/* big emoji */
.sticker {
    align-self: flex-end;
    display: flex;
    flex-direction: column;
    align-items: flex-end;
    gap: 13px;
    margin: 17px 0 11px;
}

.sticker > svg {
    display: block;
}

.time-pill {
    margin-right: 4px;
    padding: 11px 12px 10px 14px;
    border-radius: 23px;
    background-color: #144d37;
}

.time-pill .time {
    float: none;
    margin: 0;
}

.stars-bubble {
    display: flex;
    align-items: flex-end;
    padding-top: 14px;
}

.stars {
    display: flex;
    gap: 2px;
    margin-bottom: 12px;
}

.stars svg {
    width: 39px;
    height: 39px;
}

/* reply */
.reply {
    padding: 7px 6px 4px;
}

.quote {
    padding: 9px 12px 8px 21px;
    border-radius: 12px;
    background: linear-gradient(to right, #21c063 7px, #1d2329 7px);
    color: #8b9198;
    font-size: 24px;
}

.quote strong {
    display: block;
    color: #a8dfc0;
    font-weight: 500;
}

.reply-text {
    display: flow-root;
    padding: 8px 8px 0 11px;
}

.reaction {
    position: absolute;
    left: 14px;
    bottom: -36px;
    width: 51px;
    height: 43px;
    border: 2px solid #0b1014;
    border-radius: 22px;
    background-color: #1f272a;
}

.scroll-down {
    position: absolute;
    right: 21px;
    bottom: 34px;
    width: 54px;
    height: 54px;
    border-radius: 50%;
    background-color: #29343b;
}

/* composer */
.composer {
    position: relative;
    display: flex;
    align-items: center;
    gap: 8px;
    padding: 0 8px 7px;
}

.message-box {
    flex: 1;
    min-width: 0;
    display: flex;
    align-items: center;
    height: 80px;
    padding: 0 22px;
    border-radius: 40px;
    background-color: #1f272a;
}

.icon-btn {
    flex: none;
}

.icon-btn svg {
    width: 36px;
    height: 36px;
    fill: none;
    stroke: #8e9599;
    stroke-width: 9;
    stroke-linecap: round;
    stroke-linejoin: round;
}

.icon-btn .solid {
    fill: #8e9599;
    stroke: none;
}

.icon-btn + .icon-btn {
    margin-left: 46px;
}

.caret {
    position: relative;
    flex: none;
    width: 4px;
    height: 42px;
    margin: 0 -3px 0 22px;
    background-color: #21c063;
}

.message-input {
    flex: 1;
    min-width: 0;
    padding: 0;
    border: none;
    outline: none;
    background: none;
    color: #f4f6f7;
    font-family: inherit;
    font-size: 30px;
}

.message-input::placeholder {
    color: #858c90;
    opacity: 1;
}

.mic-btn {
    flex: none;
    width: 81px;
    height: 81px;
    border-radius: 50%;
    background-color: #21c063;
}

/* system gesture bar */
.nav-bar {
    display: flex;
    justify-content: center;
    padding: 9px 0 12px;
}

.nav-bar span {
    width: 33%;
    height: 7px;
    border-radius: 4px;
    background-color: #8b8d90;
}
```
